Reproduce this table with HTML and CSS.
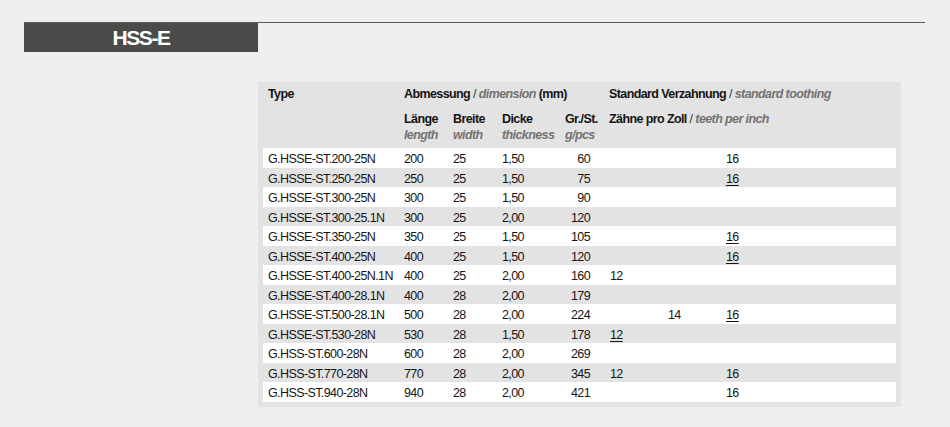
FILE: index.html
```html
<!DOCTYPE html>
<html lang="de">
<head>
<meta charset="utf-8">
<title>HSS-E</title>
<link rel="stylesheet" href="styles.css">
</head>
<body>
<header class="title-band">
  <h1 class="title-bar">HSS-E</h1>
</header>
<section class="panel">
  <div class="head-row head-top">
    <div class="c-type b">Type</div>
    <div class="c-dim b">Abmessung <span class="sl">/</span> <span class="en">dimension</span> (mm)</div>
    <div class="c-teeth b">Standard Verzahnung <span class="sl">/</span> <span class="en">standard toothing</span></div>
  </div>
  <div class="head-row head-sub">
    <div class="c-type"></div>
    <div class="cell"><span class="b">Länge</span><br><span class="en">length</span></div>
    <div class="cell"><span class="b">Breite</span><br><span class="en">width</span></div>
    <div class="cell"><span class="b">Dicke</span><br><span class="en">thickness</span></div>
    <div class="cell"><span class="b">Gr./St.</span><br><span class="en">g/pcs</span></div>
    <div class="c-teeth"><span class="b">Zähne pro Zoll</span> <span class="sl">/</span> <span class="en">teeth per inch</span></div>
  </div>

  <div class="row"><div class="cell">G.HSSE-ST.200-25N</div><div class="cell">200</div><div class="cell">25</div><div class="cell">1,50</div><div class="cell num">60</div><div class="t"></div><div class="t"></div><div class="t">16</div><div></div></div>
  <div class="row"><div class="cell">G.HSSE-ST.250-25N</div><div class="cell">250</div><div class="cell">25</div><div class="cell">1,50</div><div class="cell num">75</div><div class="t"></div><div class="t"></div><div class="t"><u>16</u></div><div></div></div>
  <div class="row"><div class="cell">G.HSSE-ST.300-25N</div><div class="cell">300</div><div class="cell">25</div><div class="cell">1,50</div><div class="cell num">90</div><div class="t"></div><div class="t"></div><div class="t"></div><div></div></div>
  <div class="row"><div class="cell">G.HSSE-ST.300-25.1N</div><div class="cell">300</div><div class="cell">25</div><div class="cell">2,00</div><div class="cell num">120</div><div class="t"></div><div class="t"></div><div class="t"></div><div></div></div>
  <div class="row"><div class="cell">G.HSSE-ST.350-25N</div><div class="cell">350</div><div class="cell">25</div><div class="cell">1,50</div><div class="cell num">105</div><div class="t"></div><div class="t"></div><div class="t"><u>16</u></div><div></div></div>
  <div class="row"><div class="cell">G.HSSE-ST.400-25N</div><div class="cell">400</div><div class="cell">25</div><div class="cell">1,50</div><div class="cell num">120</div><div class="t"></div><div class="t"></div><div class="t"><u>16</u></div><div></div></div>
  <div class="row"><div class="cell">G.HSSE-ST.400-25N.1N</div><div class="cell">400</div><div class="cell">25</div><div class="cell">2,00</div><div class="cell num">160</div><div class="t">12</div><div class="t"></div><div class="t"></div><div></div></div>
  <div class="row"><div class="cell">G.HSSE-ST.400-28.1N</div><div class="cell">400</div><div class="cell">28</div><div class="cell">2,00</div><div class="cell num">179</div><div class="t"></div><div class="t"></div><div class="t"></div><div></div></div>
  <div class="row"><div class="cell">G.HSSE-ST.500-28.1N</div><div class="cell">500</div><div class="cell">28</div><div class="cell">2,00</div><div class="cell num">224</div><div class="t"></div><div class="t">14</div><div class="t"><u>16</u></div><div></div></div>
  <div class="row"><div class="cell">G.HSSE-ST.530-28N</div><div class="cell">530</div><div class="cell">28</div><div class="cell">1,50</div><div class="cell num">178</div><div class="t"><u>12</u></div><div class="t"></div><div class="t"></div><div></div></div>
  <div class="row"><div class="cell">G.HSS-ST.600-28N</div><div class="cell">600</div><div class="cell">28</div><div class="cell">2,00</div><div class="cell num">269</div><div class="t"></div><div class="t"></div><div class="t"></div><div></div></div>
  <div class="row"><div class="cell">G.HSS-ST.770-28N</div><div class="cell">770</div><div class="cell">28</div><div class="cell">2,00</div><div class="cell num">345</div><div class="t">12</div><div class="t"></div><div class="t">16</div><div></div></div>
  <div class="row"><div class="cell">G.HSS-ST.940-28N</div><div class="cell">940</div><div class="cell">28</div><div class="cell">2,00</div><div class="cell num">421</div><div class="t"></div><div class="t"></div><div class="t">16</div><div></div></div>
</section>
</body>
</html>
```

FILE: styles.css
```css
html, body {
  margin: 0;
  padding: 0;
  background: #efefef;
}

body {
  font-family: "Liberation Sans", Arial, sans-serif;
  font-size: 12.5px;
  letter-spacing: -0.6px;
  color: #151515;
}

.title-band {
  margin: 22px 0 0 24px;
  width: 901px;
  border-top: 1.5px solid #5a5a5a;
}

.title-bar {
  margin: 0;
  width: 234px;
  height: 29px;
  background: #4b4b49;
  color: #ffffff;
  font-size: 21px;
  font-weight: bold;
  letter-spacing: -1.4px;
  line-height: 29px;
  text-align: center;
}

.panel {
  margin: 30px 0 0 258px;
  width: 633px;
  padding: 5px 5px 5px 5px;
  background: #e3e3e3;
}

.head-row,
.row {
  display: grid;
  grid-template-columns: 136px 49px 49px 63px 44px 58px 58px 58px 1fr;
}

.head-row {
  line-height: 15.5px;
}

.head-top {
  height: 25px;
}

.head-sub {
  padding-bottom: 5px;
}

.c-type {
  grid-column: 1;
  padding-left: 5px;
}

.c-dim {
  grid-column: 2 / 6;
  padding-left: 5px;
  white-space: nowrap;
}

.c-teeth {
  grid-column: 6 / 10;
  padding-left: 5px;
  white-space: nowrap;
}

.b {
  font-weight: bold;
}

.en {
  font-style: italic;
  font-weight: bold;
  color: #737373;
}

.sl {
  font-weight: normal;
  color: #333333;
}

.cell {
  padding-left: 5px;
  white-space: nowrap;
}

.row {
  height: 19.54px;
  box-sizing: border-box;
  padding-top: 3px;
  line-height: 16.5px;
  background: #ffffff;
}

.row:nth-of-type(even) {
  background: #e3e3e3;
}

.num {
  text-align: right;
  padding-right: 14px;
}

.t {
  padding-left: 6px;
}

u {
  text-decoration: underline;
  text-underline-offset: 2px;
}
```
